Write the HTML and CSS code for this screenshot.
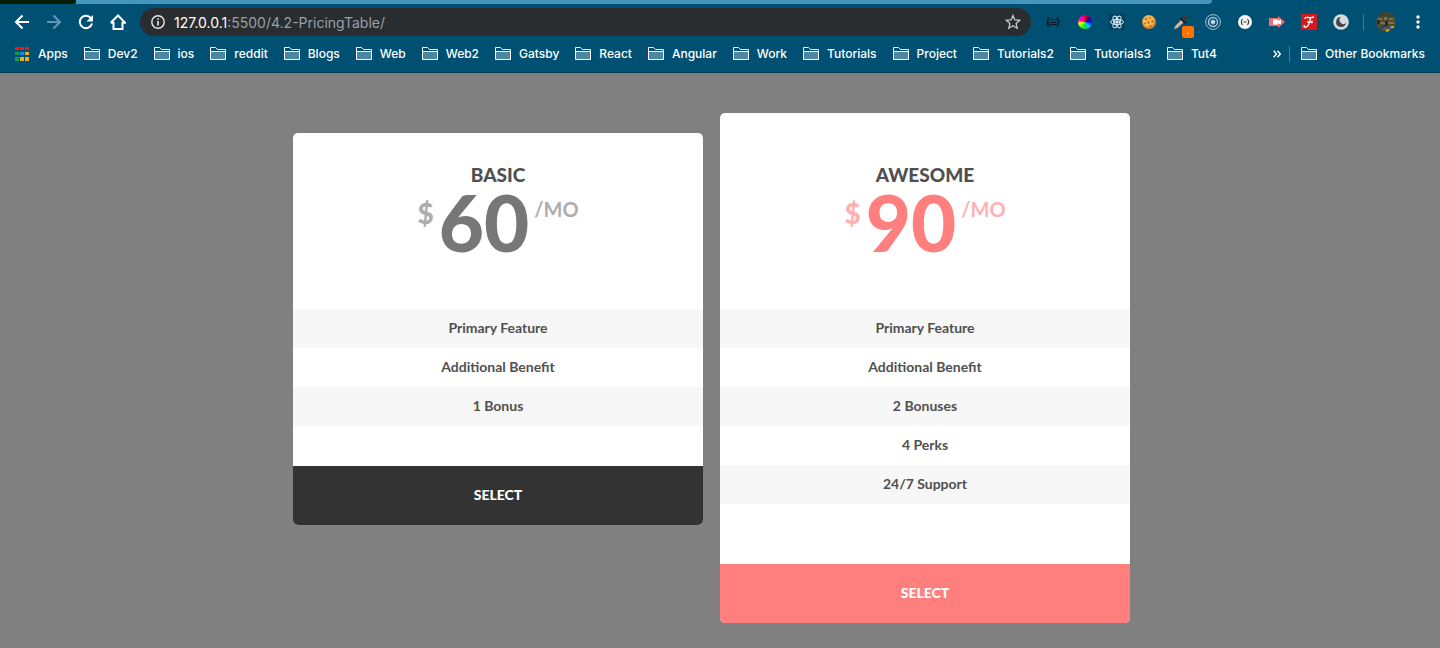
FILE: index.html
```html
<!DOCTYPE html>
<html lang="en">
<head>
  <meta charset="UTF-8">
  <title>Pricing Table</title>
  <link rel="stylesheet" href="styles.css">
</head>
<body>
  <!-- folder icon shared by the bookmarks -->
  <svg class="defs" width="0" height="0" aria-hidden="true">
    <symbol id="folder" viewBox="0 0 16 14">
      <path d="M.5 12.500V.5h5l2 2h8v10z" fill="#005074" stroke="#fff"/>
      <path d="M1 5h14v7H1z" fill="#4b87a0"/>
      <path d="M1 4.500h14" stroke="#fff"/>
    </symbol>
  </svg>

  <header class="browser">
    <div class="tabs">
      <div class="tab-dark"></div>
      <div class="tab-active"></div>
      <div class="tab-rest"></div>
    </div>

    <div class="toolbar">
      <button class="icon-btn" aria-label="Back">
        <svg width="16" height="16" viewBox="0 0 16 16" fill="none" stroke="#fff" stroke-width="2"><path d="M15 8H2M8.500 1.500L2 8l6.500 6.500"/></svg>
      </button>
      <button class="icon-btn" aria-label="Forward">
        <svg width="16" height="16" viewBox="0 0 16 16" fill="none" stroke="#6399b0" stroke-width="2"><path d="M1 8h13M7.500 1.500L14 8l-6.500 6.500"/></svg>
      </button>
      <button class="icon-btn" aria-label="Reload">
        <svg width="16" height="16" viewBox="0 0 16 16"><path d="M13.200 4.500A6.200 6.200 0 1 0 14 9.500" fill="none" stroke="#fff" stroke-width="2"/><path d="M15 1v6.500H8.500z" fill="#fff"/></svg>
      </button>
      <button class="icon-btn" aria-label="Home">
        <svg width="16" height="16" viewBox="0 0 16 16" fill="none" stroke="#fff" stroke-width="2"><path d="M3.500 8v7h9V8M.8 8.800L8 1.500l7.200 7.300H12M.8 8.800H4"/></svg>
      </button>

      <div class="address">
        <svg width="14" height="14" viewBox="0 0 14 14"><circle cx="7" cy="7" r="6.200" fill="none" stroke="#e8eaed" stroke-width="1.400"/><path d="M7 6v4.500M7 3.300v1.500" stroke="#e8eaed" stroke-width="1.600"/></svg>
        <label class="host" for="url">127.0.0.1</label>
        <input class="path" id="url" type="text" value=":5500/4.2-PricingTable/">
        <button class="star" aria-label="Bookmark this page">
          <svg width="16" height="16" viewBox="0 0 16 16" fill="none" stroke="#c6c9cc" stroke-width="1.300"><path d="M8 1.500l1.900 4.400 4.800.4-3.600 3.200 1.100 4.700L8 11.700l-4.200 2.500 1.100-4.700L1.300 6.300l4.800-.4z"/></svg>
        </button>
      </div>

      <button class="icon-btn" aria-label="JSON viewer">
        <svg width="16" height="16" viewBox="0 0 16 16" fill="none" stroke="#0a161c" stroke-width="1.400"><path d="M4.500 4Q3 4 3 5.200v1.300Q3 8 1.500 8 3 8 3 9.500v1.300Q3 12 4.500 12M11.500 4Q13 4 13 5.200v1.300Q13 8 14.500 8 13 8 13 9.500v1.300Q13 12 11.500 12"/><path d="M5 5.500h6M5 8.500h6M5 10.500h6" stroke-width="1"/></svg>
      </button>
      <button class="icon-btn" aria-label="Color wheel">
        <span class="wheel"></span>
      </button>
      <button class="icon-btn" aria-label="React tools">
        <svg width="16" height="16" viewBox="0 0 16 16" fill="none" stroke="#d9f0f8"><path d="M0 0h16v16H0z" fill="#00405c" stroke="none"/><ellipse cx="8" cy="8" rx="6.500" ry="2.600"/><ellipse cx="8" cy="8" rx="6.500" ry="2.600" transform="rotate(60 8 8)"/><ellipse cx="8" cy="8" rx="6.500" ry="2.600" transform="rotate(120 8 8)"/><circle cx="8" cy="8" r="1.200" fill="#fff"/></svg>
      </button>
      <button class="icon-btn" aria-label="Cookies">
        <svg width="16" height="16" viewBox="0 0 16 16"><circle cx="8" cy="8" r="7" fill="#d98a26"/><circle cx="7.500" cy="7" r="5.800" fill="#f2b64c"/><g fill="#a5601c"><circle cx="5" cy="5" r="1"/><circle cx="9" cy="4" r=".8"/><circle cx="11.500" cy="7.500" r="1"/><circle cx="7.500" cy="8.500" r="1"/><circle cx="4" cy="9.500" r=".8"/><circle cx="9.500" cy="12" r="1"/></g></svg>
      </button>
      <button class="icon-btn" aria-label="Color picker">
        <svg width="16" height="16" viewBox="0 0 16 16"><path d="M8 6l2.500 2.500-6 5.500L1 15.200 2.300 12z" fill="#e0b3a0"/><path d="M7.500 4l5 5" stroke="#15191c" stroke-width="1.800"/><path d="M9 5L12.500 1.500q1.500-1 2.500 0t0 2.500L11.500 7.500z" fill="#493232"/></svg>
        <span class="badge">.</span>
      </button>
      <button class="icon-btn" aria-label="Rings">
        <svg width="16" height="16" viewBox="0 0 16 16" fill="none" stroke="#a9c4d1"><circle cx="8" cy="8" r="7.400"/><circle cx="8" cy="8" r="4.500" stroke-width="1.500"/><circle cx="8" cy="8" r="2" fill="#d3e1e8"/></svg>
      </button>
      <button class="icon-btn" aria-label="Code tools">
        <svg width="16" height="16" viewBox="0 0 16 16" fill="none" stroke="#333" stroke-width="1.100"><circle cx="8" cy="8" r="7" fill="#f4f4f4" stroke="none"/><path d="M5.500 5Q3.300 8 5.500 11M10.500 5Q12.700 8 10.500 11M6.500 8h3"/></svg>
      </button>
      <button class="icon-btn" aria-label="Screen recorder">
        <svg width="16" height="16" viewBox="0 0 16 16"><path d="M0 4h9V2l7 6-7 6v-2H0z" fill="#f26b73"/><path d="M4 5.500h5v5H4zM8 7l4-1.500v5L8 9z" fill="#fff"/></svg>
      </button>
      <button class="icon-btn" aria-label="Font finder">
        <svg width="16" height="16" viewBox="0 0 16 16" fill="none" stroke="#fff"><path d="M0 0h16v16H0z" fill="#d2191b" stroke="none"/><path d="M4 5Q4 3 7 3.500T13 3M9.500 4Q8 12.500 5 13T3.500 11M6 8h5M11 6.800v2.400" stroke-width="1.400"/></svg>
      </button>
      <button class="icon-btn" aria-label="Dark mode">
        <svg width="16" height="16" viewBox="0 0 16 16"><circle cx="8" cy="8" r="7.800" fill="#d8dadd"/><path d="M8 3A5 5 0 1 0 13 9 3.600 3.600 0 0 1 8 3z" fill="#41464b"/></svg>
      </button>
      <span class="divider"></span>
      <button class="icon-btn" aria-label="Profile">
        <svg width="20" height="20" viewBox="0 0 20 20"><clipPath id="round"><circle cx="10" cy="10" r="10"/></clipPath><g clip-path="url(#round)"><path d="M0 0h20v20H0z" fill="#4f4c35"/><path d="M0 0h20v5H0z" fill="#3c4430"/><path d="M2 6h4v2H2zM8 5h3v3H8zM13 6h4v2h-4zM4 10h5v2H4zM12 10h6v2h-6z" fill="#80704c"/><path d="M1 8h3v4H1zM9 9h3v5H9zM6 14h3v3H6z" fill="#28292a"/><path d="M7 15h3v3H7zM13 14h2v4h-2z" fill="#38649c"/><path d="M10 17h3v3h-3zM15 14h3v2h-3z" fill="#c4a62d"/></g></svg>
      </button>
      <button class="icon-btn" aria-label="Menu">
        <svg width="16" height="16" viewBox="0 0 16 16" fill="#fff"><circle cx="8" cy="3" r="1.700"/><circle cx="8" cy="8" r="1.700"/><circle cx="8" cy="13" r="1.700"/></svg>
      </button>
    </div>

    <nav class="bookmarks">
      <a href="#">
        <svg class="apps" width="14" height="14" viewBox="0 0 14 14"><path d="M0 0h4v3H0zM5 0h4v3H5zM10 0h4v3h-4z" fill="#f21b1b"/><path d="M0 5h4v3H0zM0 10h4v4H0z" fill="#159c58"/><path d="M5 5h4v3H5z" fill="#1a84f0"/><path d="M5 10h4v4H5zM10 10h4v4h-4zM10 5h4v3h-4z" fill="#f4ad18"/></svg>Apps</a>
      <a href="#"><svg width="16" height="14"><use href="#folder"/></svg>Dev2</a>
      <a href="#"><svg width="16" height="14"><use href="#folder"/></svg>ios</a>
      <a href="#"><svg width="16" height="14"><use href="#folder"/></svg>reddit</a>
      <a href="#"><svg width="16" height="14"><use href="#folder"/></svg>Blogs</a>
      <a href="#"><svg width="16" height="14"><use href="#folder"/></svg>Web</a>
      <a href="#"><svg width="16" height="14"><use href="#folder"/></svg>Web2</a>
      <a href="#"><svg width="16" height="14"><use href="#folder"/></svg>Gatsby</a>
      <a href="#"><svg width="16" height="14"><use href="#folder"/></svg>React</a>
      <a href="#"><svg width="16" height="14"><use href="#folder"/></svg>Angular</a>
      <a href="#"><svg width="16" height="14"><use href="#folder"/></svg>Work</a>
      <a href="#"><svg width="16" height="14"><use href="#folder"/></svg>Tutorials</a>
      <a href="#"><svg width="16" height="14"><use href="#folder"/></svg>Project</a>
      <a href="#"><svg width="16" height="14"><use href="#folder"/></svg>Tutorials2</a>
      <a href="#"><svg width="16" height="14"><use href="#folder"/></svg>Tutorials3</a>
      <a href="#"><svg width="16" height="14"><use href="#folder"/></svg>Tut4</a>
      <button class="more" aria-label="More bookmarks">
        <svg width="8" height="8" viewBox="0 0 8 8" fill="none" stroke="#fff" stroke-width="1.400"><path d="M.7.800L3.500 4 .7 7.200M4.500.800L7.300 4 4.500 7.200"/></svg>
      </button>
      <a class="other" href="#"><svg width="16" height="14"><use href="#folder"/></svg>Other Bookmarks</a>
    </nav>
  </header>

  <main class="pricing">
    <section class="card basic">
      <h2>BASIC</h2>
      <div class="price">
        <span class="currency">$</span>
        <span class="amount">60</span>
        <span class="period">/MO</span>
      </div>
      <ul>
        <li>Primary Feature</li>
        <li>Additional Benefit</li>
        <li>1 Bonus</li>
      </ul>
      <button class="select">SELECT</button>
    </section>

    <section class="card awesome">
      <h2>AWESOME</h2>
      <div class="price">
        <span class="currency">$</span>
        <span class="amount">90</span>
        <span class="period">/MO</span>
      </div>
      <ul>
        <li>Primary Feature</li>
        <li>Additional Benefit</li>
        <li>2 Bonuses</li>
        <li>4 Perks</li>
        <li>24/7 Support</li>
      </ul>
      <button class="select">SELECT</button>
    </section>
  </main>
</body>
</html>
```
FILE: styles.css
```css
* {
  box-sizing: border-box;
}
body {
  margin: 0;
  min-height: 100vh;
  background-color: #808080;
  font-family: Lato, sans-serif;
}
button {
  border: none;
  padding: 0;
  background: none;
  cursor: pointer;
}
.defs {
  position: absolute;
}

/* browser bar */
.browser {
  background-color: #005074;
  border-bottom: 1px solid #003b57;
  font-family: Inter, sans-serif;
}
.tabs {
  display: flex;
  height: 4px;
  background-color: #005074;
}
.tab-dark {
  width: 76px;
  background-color: #061c05;
  border-bottom-right-radius: 4px;
}
.tab-active {
  flex: 1;
  background-color: #4596bc;
  border-bottom-right-radius: 4px;
}
.tab-rest {
  width: 228px;
}
.toolbar {
  display: flex;
  align-items: center;
  height: 36px;
  padding: 0 6px;
}
.icon-btn {
  position: relative;
  display: flex;
  align-items: center;
  justify-content: center;
  flex: none;
  width: 32px;
  height: 28px;
}
.address {
  display: flex;
  align-items: center;
  flex: 1;
  height: 28px;
  margin: 0 6px;
  padding: 0 10px 0 11px;
  border-radius: 14px;
  background-color: #292d30;
  font-size: 14px;
}
.host {
  margin-left: 9px;
  color: #fff;
}
.path {
  flex: 1;
  min-width: 0;
  padding: 0;
  border: none;
  outline: none;
  background: none;
  color: #9aa0a6;
  font: inherit;
}
.star {
  display: flex;
}
.wheel {
  width: 14px;
  height: 14px;
  border-radius: 50%;
  background: conic-gradient(#e02, #307 15%, #11f 25%, #0cf 38%, #0d4 50%, #6f0 62%, #ef0 72%, #f0c 80%, #f0a 90%, #e02);
}
.badge {
  position: absolute;
  right: 3px;
  bottom: -2px;
  width: 12px;
  height: 12px;
  border-radius: 2px;
  background-color: #ff7300;
  color: #fff;
  font-size: 10px;
  line-height: 10px;
}
.divider {
  width: 1px;
  height: 16px;
  margin: 0 6px;
  background-color: #3f7d99;
}
.bookmarks {
  display: flex;
  align-items: center;
  gap: 16px;
  height: 32px;
  padding: 0 15px 4px;
}
.bookmarks a {
  display: flex;
  align-items: center;
  gap: 8px;
  color: #fff;
  font-size: 12px;
  font-weight: 500;
  line-height: 16px;
  white-space: nowrap;
  text-decoration: none;
}
.bookmarks .apps {
  margin-right: 1px;
}
.more {
  display: flex;
  margin-left: auto;
  margin-right: -8px;
}
.bookmarks .other {
  padding-left: 11px;
  border-left: 1px solid #3f7d99;
}

/* pricing table */
.pricing {
  display: flex;
  justify-content: center;
  align-items: flex-start;
  gap: 17px;
  padding: 40px 17px 25px 0;
}
.card {
  width: 410px;
  border-radius: 5px;
  overflow: hidden;
  background-color: #fff;
  color: #505050;
  text-align: center;
}
.basic {
  margin-top: 20px;
  padding-top: 30px;
}
.awesome {
  padding-top: 50px;
}
.card h2 {
  margin: 0;
  font-size: 19px;
  font-weight: 900;
  line-height: 24px;
}
.price {
  display: flex;
  justify-content: center;
  gap: 5px;
  height: 72px;
  margin-bottom: 50px;
  color: #777;
  font-weight: 900;
}
.amount {
  font-size: 78px;
  line-height: 70px;
}
.currency {
  font-size: 28px;
  line-height: 52px;
  opacity: 0.6;
}
.period {
  font-size: 20px;
  font-weight: 700;
  line-height: 44px;
  opacity: 0.6;
}
.card ul {
  margin: 0;
  padding: 0 0 40px;
  list-style: none;
}
.card li {
  padding-bottom: 2px;
  font-size: 14px;
  font-weight: 700;
  line-height: 37px;
}
.card li:nth-child(odd) {
  background-color: #f7f7f7;
}
.select {
  display: block;
  width: 100%;
  height: 59px;
  padding-bottom: 2px;
  background-color: #333;
  color: #fff;
  font: 900 14px Lato, sans-serif;
}
.awesome .price {
  color: #ff7f7f;
}
.awesome ul {
  padding-bottom: 60px;
}
.awesome .select {
  background-color: #ff7f7f;
}
```
